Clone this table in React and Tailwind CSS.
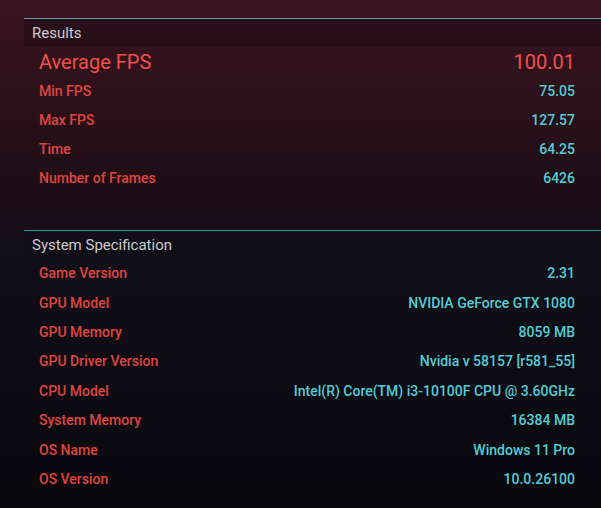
const results = [
  ['Min FPS', '75.05'],
  ['Max FPS', '127.57'],
  ['Time', '64.25'],
  ['Number of Frames', '6426'],
]

const specs = [
  ['Game Version', '2.31'],
  ['GPU Model', 'NVIDIA GeForce GTX 1080'],
  ['GPU Memory', '8059 MB'],
  ['GPU Driver Version', 'Nvidia v 58157 [r581_55]'],
  ['CPU Model', 'Intel(R) Core(TM) i3-10100F CPU @ 3.60GHz'],
  ['System Memory', '16384 MB'],
  ['OS Name', 'Windows 11 Pro'],
  ['OS Version', '10.0.26100'],
]

function Row({ label, value }) {
  return (
    <div className="flex h-[29.4px] items-center justify-between pl-[15px] pr-[26px] text-[14px]">
      <span className="text-[#e0443e]">{label}</span>
      <span className="text-[#52cdd4]">{value}</span>
    </div>
  )
}

export default function App() {
  return (
    <div
      className="h-[508px] w-[601px] overflow-hidden bg-[linear-gradient(to_bottom,#3a1320_0%,#2a1019_22%,#1c0d15_40%,#110f19_48%,#0c0b13_75%,#08080d_100%)] pl-[24px] pt-[18px] font-medium"
      style={{ fontFamily: 'Roboto, "Liberation Sans", sans-serif' }}
    >
      {/* Results */}
      <div className="h-[212px] border-t border-[#5b9ca1]">
        <div className="flex h-[28px] items-center bg-[#230e17]/70 pl-[8px] text-[15px] font-normal text-[#cbcbd0]">
          Results
        </div>
        <div className="flex h-[30px] items-center justify-between pl-[15px] pr-[26px] text-[20px] font-normal text-[#f0504a]">
          <span>Average FPS</span>
          <span>100.01</span>
        </div>
        {results.map(([l, v]) => (
          <div key={l} className="flex h-[29px] items-center justify-between pl-[15px] pr-[26px] text-[14px]">
            <span className="text-[#e0443e]">{l}</span>
            <span className="text-[#52cdd4]">{v}</span>
          </div>
        ))}
      </div>

      {/* System Specification */}
      <div className="border-t border-[#1f9a9e]">
        <div className="flex h-[28px] items-center bg-[#0f0d16]/50 pl-[8px] text-[15px] font-normal text-[#cbcbd0]">
          System Specification
        </div>
        {specs.map(([l, v]) => (
          <Row key={l} label={l} value={v} />
        ))}
      </div>
    </div>
  )
}
